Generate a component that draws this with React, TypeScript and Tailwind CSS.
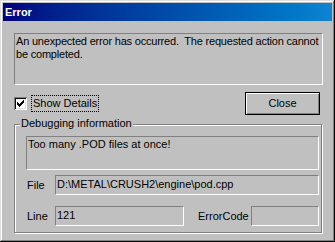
import type { ReactNode } from "react";

function Sunken({ className, children }: { className: string; children?: ReactNode }) {
  return (
    <div
      className={`border border-[#808080] border-b-white border-r-white overflow-hidden whitespace-pre ${className}`}
    >
      {children}
    </div>
  );
}

function CheckMark() {
  const rows: [number, number, number][] = [
    [6, 0, 1],
    [5, 1, 2],
    [0, 2, 1],
    [4, 2, 3],
    [0, 3, 2],
    [3, 3, 3],
    [0, 4, 5],
    [1, 5, 3],
    [2, 6, 1],
  ];
  return (
    <svg width="7" height="7" viewBox="0 0 7 7" shapeRendering="crispEdges">
      {rows.map(([x, y, w], i) => (
        <rect key={i} x={x} y={y} width={w} height={1} fill="#000" />
      ))}
    </svg>
  );
}

export default function App() {
  return (
    <div className="w-[335px] h-[242px] bg-[#c0c0c0] p-[3px] text-black text-[11px] leading-[13px] font-['Liberation_Sans',Arial,sans-serif] shadow-[inset_-1px_-1px_#0a0a0a,inset_1px_1px_#dfdfdf,inset_-2px_-2px_#808080,inset_2px_2px_#ffffff]">
      {/* title bar */}
      <div className="h-[18px] flex items-center pl-[2px] bg-gradient-to-r from-[#000080] to-[#1084d0] text-white font-bold">
        Error
      </div>

      {/* message */}
      <Sunken className="ml-[11px] mt-[12px] w-[309px] h-[52px] pl-[1px] pt-[1px] tracking-[-0.2px]">
        {"An unexpected error has occurred.  The requested action cannot\nbe completed."}
      </Sunken>

      {/* checkbox + close */}
      <div className="ml-[11px] mt-[7px] w-[306px] h-[23px] flex items-center">
        <div className="w-[13px] h-[13px] bg-white flex items-center justify-center shadow-[inset_1px_1px_#808080,inset_-1px_-1px_#ffffff,inset_2px_2px_#0a0a0a,inset_-2px_-2px_#dfdfdf]">
          <CheckMark />
        </div>
        <div className="ml-[4px] h-[17px] flex items-center px-[1px] border border-dotted border-black">
          Show Details
        </div>
        <button className="ml-auto w-[75px] h-[23px] border border-black bg-[#c0c0c0] flex items-center justify-center shadow-[inset_1px_1px_#ffffff,inset_-1px_-1px_#808080]">
          Close
        </button>
      </div>

      {/* debugging group */}
      <div className="ml-[11px] mt-[9px] w-[308px] h-[109px] border border-[#808080] shadow-[inset_1px_1px_#ffffff,1px_1px_#ffffff]">
        <div className="-mt-[8px] h-[13px] flex">
          <span className="ml-[5px] px-[1px] bg-[#c0c0c0]">Debugging information</span>
        </div>
        <Sunken className="ml-[11px] mt-[6px] w-[293px] h-[34px] pl-[1px] pt-[1px]">
          Too many .POD files at once!
        </Sunken>
        <div className="ml-[12px] mt-[5px] flex items-center">
          <div className="w-[28px]">File</div>
          <Sunken className="w-[264px] h-[20px] pl-[1px] pt-[2px]">D:\METAL\CRUSH2\engine\pod.cpp</Sunken>
        </div>
        <div className="ml-[12px] mt-[11px] flex items-center">
          <div className="w-[28px]">Line</div>
          <Sunken className="w-[129px] h-[20px] pl-[1px] pt-[2px]">121</Sunken>
          <div className="ml-[14px] w-[53px]">ErrorCode</div>
          <Sunken className="w-[68px] h-[20px]" />
        </div>
      </div>
    </div>
  );
}
